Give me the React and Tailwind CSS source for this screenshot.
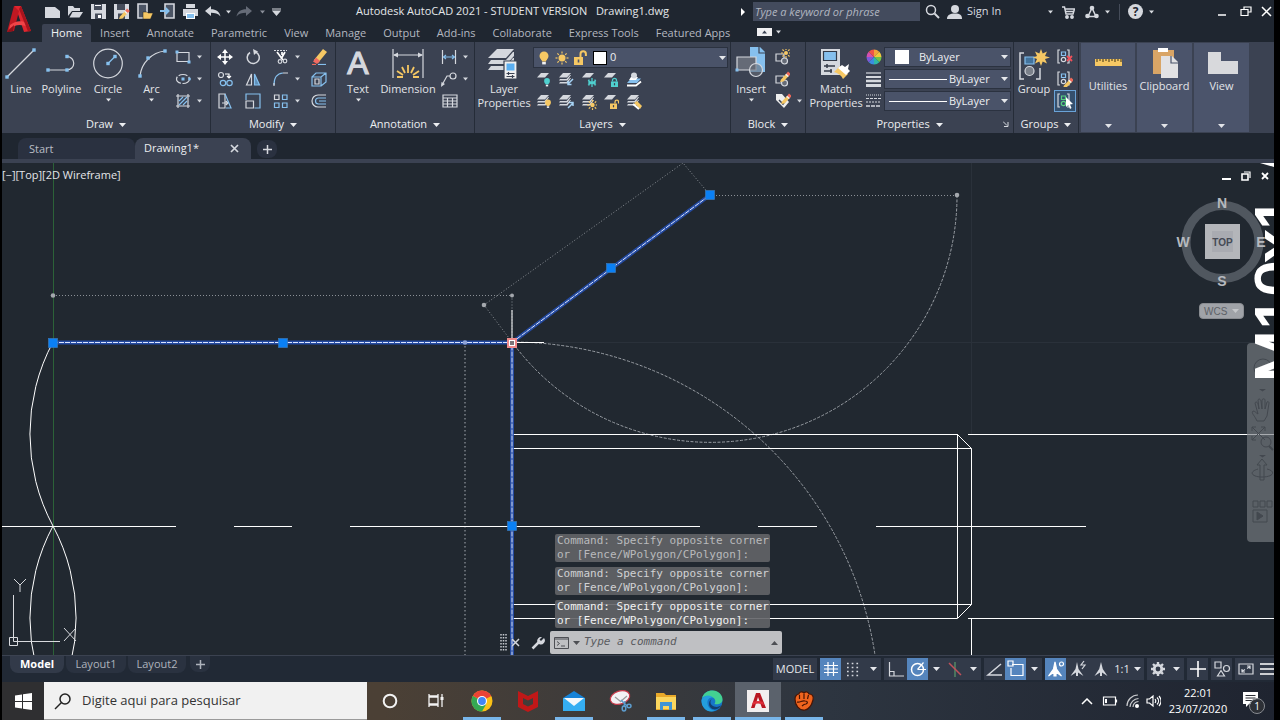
import { useState } from 'react';
import clsx from 'clsx';

const L = '#d5d8de';
const B = '#86c0ee';
const Y = '#f6c864';

const Svg = ({ w = 16, h = 16, children, className }) => (
  <svg
    width={w}
    height={h}
    viewBox={`0 0 ${w} ${h}`}
    fill="none"
    stroke={L}
    strokeWidth="1.2"
    className={clsx('shrink-0', className)}
    aria-hidden="true"
  >
    {children}
  </svg>
);

const Caret = ({ className }) => (
  <svg width="7" height="4" viewBox="0 0 7 4" className={clsx('shrink-0', className)} fill="currentColor" aria-hidden="true">
    <path d="M0 0h7L3.5 4z" />
  </svg>
);

const Dot = ({ x, y, s = 3.4 }) => (
  <rect x={x - s / 2} y={y - s / 2} width={s} height={s} fill={B} stroke="none" />
);

/* ---------- shared icon parts ---------- */

const Pencil = ({ x = 0, y = 0 }) => (
  <g transform={`translate(${x} ${y})`} stroke="none">
    <path d="M1 8.5L6 3l2.5 2.3L3.5 10.5 0 11z" fill={Y} />
    <path d="M6 3l2-2.5 3 2.5-2.5 2.3z" fill="#ef6a5a" />
    <path d="M5.3 3.7l.9-.9 2.6 2.3-.9.9z" fill="#f3f3f3" />
  </g>
);

const Sun = ({ x, y, r = 3 }) => (
  <g transform={`translate(${x} ${y})`}>
    <circle r={r} fill={Y} stroke="none" />
    {[0, 45, 90, 135, 180, 225, 270, 315].map((a) => (
      <path key={a} d={`M0 ${-r - 1}V${-r - 3}`} stroke={Y} strokeWidth="1.2" transform={`rotate(${a})`} />
    ))}
  </g>
);

const Bulb = ({ x, y, color = Y, s = 1 }) => (
  <g transform={`translate(${x} ${y}) scale(${s})`} stroke="none">
    <circle r="3.2" fill={color} />
    <path d="M-2 2h4l-.6 2h-2.8z" fill={color} />
    <path d="M-1.3 4.2h2.6V6h-2.6z" fill="#f2f2f2" />
  </g>
);

const Padlock = ({ x, y, color = Y, open }) => (
  <g transform={`translate(${x} ${y})`}>
    <rect width="7" height="5.5" fill={color} stroke="none" />
    <path d={open ? 'M5 0V-1.5a1.8 1.8 0 0 1 3.6 0V0' : 'M1.5 0V-1.2a2 2 0 0 1 4 0V0'} stroke={color} strokeWidth="1.3" />
    <path d="M3.5 1.6v2.2" stroke="#3b4252" />
  </g>
);

const Sheets = ({ n = 3 }) => (
  <g stroke="none" fill={L}>
    <path d="M5 1h8L9 5.5H1z" />
    {n > 1 && <path d="M2 7h6.5l3.5-4h1L9.5 8.6H1z" />}
    {n > 2 && <path d="M2 10h6.5l3.5-4h1l-3.5 5.6H1z" />}
  </g>
);

/* ---------- quick access toolbar ---------- */

const quickAccess = [
  ['New', <path d="M1 4h10l5 4v7H1z" fill={L} stroke="none" />],
  ['Open', <g fill={L} stroke="none"><path d="M1 13V3h5l1.5 2H13v3H5z" /><path d="M5.5 9H16l-3.5 5.5h-10z" /></g>],
  ['Save', <g stroke="none"><path d="M1 1h15v15H1z" fill={L} /><path d="M4 1h8v6H4z M5 10.5h7V16H5z" fill="#454c5a" /><path d="M5 2h6v1H5z M8 12h3v3H8z" fill="#fff" /></g>],
  ['Save As', <g stroke="none"><path d="M1 1h15v15H1z" fill={L} /><path d="M4 1h8v6H4z M5 10.5h7V16H5z" fill="#454c5a" /><Pencil x={6} y={5} /></g>],
  ['Open from Web', <g><path d="M2 1h9v14H2z" fill="#4b5464" stroke={L} strokeWidth="1.6" /><path d="M7 16V9h4l1 1h5l-2.5 6z" fill={Y} stroke="#222" strokeWidth=".5" /></g>],
  ['Save to Web', <g><path d="M6 1h9v14H6z" fill="#4b5464" stroke={L} strokeWidth="1.6" /><path d="M1 8h8M6.500 5l3 3-3 3" stroke={B} strokeWidth="2" /></g>],
  ['Plot', <g stroke="none"><path d="M4 1h9v4H4z M1 6h15v7H1z" fill={L} /><path d="M4 10h9v6H4z" fill="#fff" /><path d="M5 11h7v4H5z" fill={B} /></g>],
];

const Arrow = ({ flip, color }) => (
  <Svg w={16} h={14} className={flip && '-scale-x-100'}>
    <path d="M0 6l6-5v3.200c5 0 8.500 2 9.500 7.300C13 8.500 10 7.800 6 7.800V11z" fill={color} stroke="none" />
  </Svg>
);

const menuTabs = ['Home', 'Insert', 'Annotate', 'Parametric', 'View', 'Manage', 'Output', 'Add-ins', 'Collaborate', 'Express Tools', 'Featured Apps'];

const Header = () => {
  const [active, setActive] = useState('Home');

  return (
    <header className="flex shrink-0 bg-[#1f2630] text-[#d8dbe0]">
      <button aria-label="Application menu" className="flex w-[39px] shrink-0 items-start pt-1 pl-1">
        <svg width="25" height="30" viewBox="0 0 25 30" aria-hidden="true">
          <path d="M8 2h7l10 25-7 1-6-18z" fill="#e0262f" />
          <path d="M8 2l5 5L8 27l-7 1z" fill="#c01822" />
          <path d="M4 21c5-4 11-5 17-2l1 4c-6-3-13-3-19 2z" fill="#f04448" />
          <path d="M1 28l7-7-1 6z" fill="#8e1018" />
          <path d="M15 2l10 25-3 .5L13 5z" fill="#a8141d" />
        </svg>
      </button>
      <div className="min-w-0 grow">
        <div className="flex h-[23px] items-center">
          {quickAccess.map(([label, icon]) => (
            <button key={label} aria-label={label} className="flex w-[23px] justify-center">
              <Svg w={17} h={17}>{icon}</Svg>
            </button>
          ))}
          <button aria-label="Undo" className="flex w-[22px] justify-center"><Arrow color={L} /></button>
          <button aria-label="Undo list" className="flex w-2 justify-center"><Caret className="w-[5px]" /></button>
          <button aria-label="Redo" className="flex w-6 justify-center"><Arrow flip color="#656b77" /></button>
          <button aria-label="Redo list" className="flex w-3 justify-center text-[#8b909a]"><Caret className="w-[5px]" /></button>
          <button aria-label="Customize toolbar" className="flex w-4 justify-center">
            <Svg w={9} h={8}><path d="M0 1h9M1 3h7L4.500 7z" fill={L} stroke={L} /></Svg>
          </button>
          <div className="min-w-0 grow text-center text-[11px] whitespace-pre text-[#e4e6ea]">
            Autodesk AutoCAD 2021 - STUDENT VERSION{'   '}Drawing1.dwg
          </div>
          <svg width="4" height="8" className="mr-2 shrink-0" fill="#fff" aria-hidden="true"><path d="M0 0l4 4-4 4z" /></svg>
          <input
            aria-label="Search help"
            placeholder="Type a keyword or phrase"
            className="h-[19px] w-[167px] bg-[#434b5d] px-0.5 text-[11px] italic outline-none placeholder:text-[#b1b6c0]"
          />
          <button aria-label="Search" className="flex w-6 justify-center">
            <Svg w={15} h={15}><circle cx="6" cy="6" r="4.500" strokeWidth="1.500" /><path d="M9.500 9.500l4.500 4.500" strokeWidth="2" /></Svg>
          </button>
          <button className="flex w-[113px] items-center gap-1 text-[11px]">
            <Svg w={17} h={16} className="ml-0.5">
              <circle cx="9" cy="5" r="4" fill={L} stroke="none" />
              <path d="M1 15c0-4 3-5.500 8-5.500s7 1.500 7 5.500z" fill={L} stroke="none" />
            </Svg>
            Sign In
            <Caret className="mr-1 ml-auto w-[5px]" />
          </button>
          <button aria-label="App store" className="flex w-[22px] justify-center">
            <Svg w={14} h={14}>
              <path d="M1 2h2.500l1.500 7h7l1.500-5H4M5 6.500h8" strokeWidth="1.500" />
              <circle cx="6" cy="12" r="1.300" fill={L} /><circle cx="11" cy="12" r="1.300" fill={L} />
            </Svg>
          </button>
          <button aria-label="Autodesk account" className="flex w-9 items-center justify-center gap-1.5">
            <Svg w={14} h={14}>
              <path d="M7 3L3 11.500h8z" strokeWidth="1.500" />
              <circle cx="7" cy="3" r="2.300" fill={L} stroke="none" />
              <circle cx="2.500" cy="11" r="2.300" fill={L} stroke="none" />
              <circle cx="11.500" cy="11" r="2.300" fill={L} stroke="none" />
            </Svg>
            <Caret className="w-[5px]" />
          </button>
          <span className="mr-2 ml-1 h-4 w-px bg-[#454c59]" />
          <button aria-label="Help" className="flex items-center gap-1.5">
            <span className="flex size-[15px] items-center justify-center rounded-full bg-[#d5d8de] text-[12px] font-bold text-[#1f2630]">?</span>
            <Caret className="w-[5px]" />
          </button>
          <div className="ml-14 flex">
            <button aria-label="Minimize" className="flex w-6 justify-center"><Svg w={8} h={10}><path d="M0 9h8" stroke="#fff" strokeWidth="1.500" /></Svg></button>
            <button aria-label="Restore" className="flex w-6 justify-center"><Svg w={12} h={10}><path d="M1 3.500h7v6H1zM4 3V1h7v5H8.500" stroke="#fff" /></Svg></button>
            <button aria-label="Close" className="flex w-4 justify-center"><Svg w={11} h={11}><path d="M1 1l9 9M10 1l-9 9" stroke="#fff" strokeWidth="1.500" /></Svg></button>
          </div>
        </div>
        <nav className="flex h-[19px] items-end gap-px">
          {menuTabs.map((tab) => (
            <button
              key={tab}
              onClick={() => setActive(tab)}
              className={clsx(
                'h-[18px] text-[11px] leading-4 whitespace-nowrap',
                active === tab ? 'ml-px rounded-t-xs bg-[#3b4252] px-[9px] text-[#f1f2f4]' : 'px-2 text-[#b4b8c0]'
              )}
            >
              {tab}
            </button>
          ))}
          <button aria-label="Minimize ribbon" className="mb-1.5 ml-[18px] flex items-center gap-1">
            <span className="flex h-2 w-[15px] items-center justify-center bg-[#f0f0f2] text-[#3b4252]"><Caret className="w-[5px] rotate-180" /></span>
            <Caret className="w-[5px]" />
          </button>
        </nav>
      </div>
    </header>
  );
};

/* ---------- ribbon ---------- */

const Panel = ({ title, width, launcher, children }) => (
  <section className={clsx('flex shrink-0 flex-col border-r border-[#252c38]', width)}>
    <div className="flex grow pt-1">{children}</div>
    <button className="relative flex h-[17px] items-center justify-center gap-1.5 text-[11px] text-[#eceef1]">
      {title}
      <Caret />
      {launcher && (
        <svg width="6" height="6" className="absolute right-1 bottom-1.5" stroke={L} fill="none" aria-hidden="true">
          <path d="M0 .500l4 4M5 1v4.500H1" />
        </svg>
      )}
    </button>
  </section>
);

const Big = ({ label, width, caret, children }) => (
  <button className={clsx('flex shrink-0 flex-col items-center text-[11px] leading-[14px] text-[#e2e4e8]', width)}>
    <Svg w={36} h={36}>{children}</Svg>
    <span className="whitespace-pre">{label}</span>
    {caret && <Caret className="mt-0.5 w-[5px]" />}
  </button>
);

const Small = ({ label, width = 'w-7', caret, on, children }) => (
  <button
    aria-label={label}
    className={clsx('flex h-[22px] items-center justify-center gap-1.5 text-[#d5d8de]', width, on && 'border border-[#6aa3d8] bg-[#35506e]')}
  >
    <Svg>{children}</Svg>
    {caret && <Caret className="w-[5px]" />}
  </button>
);

const layerTools = [
  ['Layer off', 1, <Bulb x={11} y={9} s={0.9} color="#4fd0cf" />],
  ['Isolate', 3, <path d="M15 7l-5 5M10 9v3.500h3.500" stroke="#a7d3f5" strokeWidth="1.500" />],
  ['Freeze', 1, <path d="M11 6v9M7 8.500l8 4.500M15 8.500l-8 4.500M8 7.500v6M14 7.500v6" stroke="#4fd0cf" strokeWidth="1.300" />],
  ['Lock', 1, <Padlock x={8} y={9.5} color="#4fd0cf" />],
  ['Make current', 0, <g><path d="M1 13.500h9l5-4" stroke="#fff" strokeWidth="1.800" /><path d="M1 11l4-4.500h10L11 11z" fill={B} stroke="none" /><path d="M5 5h7l-2 3H3z" fill="#fff" stroke="none" /><circle cx="8" cy="3.500" r="3" fill={L} stroke="none" /></g>],
  ['Turn all layers on', 3, <Bulb x={12} y={8.5} s={0.9} />],
  ['Unisolate', 3, <path d="M10 14l5-5M11 8.500h4V12" stroke="#a7d3f5" strokeWidth="1.500" />],
  ['Thaw', 3, <Sun x={11.5} y={11} r={2.2} />],
  ['Unlock', 1, <Padlock x={7} y={9.500} open />],
  ['Match layer', 3, <g><path d="M8 9l3-2 5 5-2 3z" fill={Y} stroke="none" /><path d="M7 10l6 5" stroke="#fff" strokeWidth="2" /></g>],
];

const PropertySelect = ({ label, pad = 'pl-16', children }) => (
  <div className="relative h-5 border border-[#2b3240] bg-[#4a5369]">
    <select aria-label={label} className={clsx('absolute inset-0 size-full appearance-none text-[11px] text-[#eceef1] outline-none', pad)}>
      <option>ByLayer</option>
      <option>ByBlock</option>
    </select>
    <div className="pointer-events-none relative flex h-full items-center pr-0.5 pl-1 text-[#e6e8ec]">
      {children}
      <Caret className="ml-auto" />
    </div>
  </div>
);

const Collapsed = ({ label, width, children }) => (
  <button className={clsx('mt-px ml-0.5 flex h-[89px] shrink-0 flex-col items-center bg-[#4b546b] pt-1 text-[11px] leading-[14px] text-[#e2e4e8]', width)}>
    <Svg w={36} h={32}>{children}</Svg>
    <span>{label}</span>
    <Caret className="mt-auto mb-1" />
  </button>
);

const groupTools = [
  ['Ungroup', <path d="M10 7l5 5M15 7l-5 5" stroke="#f0505a" strokeWidth="1.800" />],
  ['Group edit', <Pencil x={6} y={6} />],
  ['Group selection', <path d="M9 4v10l2.500-2 1.500 4 1.500-1-1.500-3.500 3-.500z" fill="#fff" stroke="none" />],
];

const Ribbon = () => (
  <div className="flex h-[91px] shrink-0 overflow-hidden bg-[#3b4252]">
    <Panel title="Draw" width="w-[209px]">
      <Big label="Line" width="w-[38px]"><path d="M4 31L31 4" /><Dot x={4} y={31} /><Dot x={31} y={4} /></Big>
      <Big label="Polyline" width="w-[43px]"><path d="M4 24h19a6.700 6.700 0 0 0 0-13.500" /><Dot x={4} y={24} /><Dot x={23} y={24} /><Dot x={23} y={10.5} /></Big>
      <Big label="Circle" width="w-[50px]" caret><circle cx="18" cy="17.500" r="14.300" /><path d="M18 17.500l7-7" stroke={B} /><Dot x={18} y={17.5} /><Dot x={25} y={10.5} /></Big>
      <Big label="Arc" width="w-[37px]" caret><path d="M6 30A28 28 0 0 1 31 5" /><Dot x={6} y={30} /><Dot x={14} y={12} /><Dot x={31} y={5} /></Big>
      <div>
        <Small label="Rectangle" width="w-9" caret><path d="M2 3.500h12v9H2z" /><Dot x={2} y={3} s={3} /><Dot x={14} y={13} s={3} /></Small>
        <Small label="Ellipse" width="w-9" caret><ellipse cx="8" cy="8" rx="6.500" ry="4.500" strokeDasharray="9 1.500" /><Dot x={8} y={8} s={3} /><Dot x={14.5} y={8} s={2.5} /></Small>
        <Small label="Hatch" width="w-9" caret><path d="M1 3h14M1 13h14M3 1v14M13 1v14" /><path d="M4 8l4-4M4 12l8-8M8 12l4-4" stroke={B} /></Small>
      </div>
    </Panel>

    <Panel title="Modify" width="w-[125px]">
      <div>
        <Small label="Move"><path d="M8 2v12M2 8h12" stroke="#fff" strokeWidth="1.500" /><path d="M8 0l3 4H5zM8 16l3-4H5zM0 8l4-3v6zM16 8l-4-3v6z" fill="#fff" stroke="none" /></Small>
        <Small label="Copy"><circle cx="4" cy="4" r="2.500" /><path d="M8 3h4v4M10 5l2 2 2-2" stroke="#fff" /><circle cx="6" cy="12" r="2.700" stroke={B} /><circle cx="12.500" cy="12" r="2.700" stroke={B} /></Small>
        <Small label="Stretch"><path d="M2 1h6v14H2zM5 10h6M9 8l2 2-2 2" /><path d="M8 1l6 14H9" stroke={B} /></Small>
      </div>
      <div>
        <Small label="Rotate"><path d="M10.500 3A6 6 0 1 1 5 3.500" strokeWidth="1.500" /><path d="M8 0l5 2.500L9 6z" fill={L} stroke="none" /></Small>
        <Small label="Mirror"><path d="M6.500 3v11H1.500z" /><path d="M9.500 3v11h5z" fill="#5f8fb8" stroke={B} /></Small>
        <Small label="Scale"><path d="M1 8h7.500v7H1z" /><path d="M1 7V1h14v14H9.500" stroke={B} /></Small>
      </div>
      <div>
        <Small label="Trim" width="w-[38px]" caret><path d="M1 1.500h13" strokeDasharray="2 1" /><path d="M4 3l6 8M12 3l-4 7M9 3v3" stroke="#fff" strokeWidth="1.700" /><circle cx="7" cy="12.500" r="1.800" /><circle cx="12" cy="12" r="1.800" /></Small>
        <Small label="Fillet" width="w-[38px]" caret><path d="M1 14C1 6 4 2.500 10 2" stroke={B} /><path d="M10 2h5M1 15v-3" /></Small>
        <Small label="Array" width="w-[38px]" caret><path d="M1.500 2h4.500v4.500H1.500z" /><path d="M9.500 2H14v4.500H9.500zM1.500 10H6v4.500H1.500zM9.500 10H14v4.500H9.500z" stroke={B} /></Small>
      </div>
      <div>
        <Small label="Erase"><path d="M3 11L12 0l4 3L7 14z" fill={Y} stroke="none" /><path d="M5 8.500l-3 4L6 15l3-3z" fill="#f06a62" stroke="none" /><path d="M1 15.500h4" stroke="#ef6a5a" /><path d="M7 15.500h8" stroke={B} /></Small>
        <Small label="Explode"><path d="M1 6h9v9H1zM1 6l4-4h10v9l-5 4M10 6l5-4" stroke={B} /><path d="M4 8h4v5H4z" /></Small>
        <Small label="Offset"><path d="M15 2H7a6 6 0 0 0 0 12h8" /><path d="M15 5H7.500a3 3 0 0 0 0 6H15M15 8H8" stroke={B} /></Small>
      </div>
    </Panel>

    <Panel title="Annotation" width="w-[139px]">
      <Big label="Text" width="w-11" caret><text x="18" y="28" textAnchor="middle" fontSize="32" fontFamily="Liberation Sans, sans-serif" fill={L}>A</text></Big>
      <Big label="Dimension" width="w-14">
        <path d="M3 3v29M33 3v29M4 9h28" /><path d="M3 9l5-2.500v5zM33 9l-5-2.500v5z" fill={L} stroke="none" />
        <path d="M18 19v8M12 21l3 6M24 21l-3 6M7 25l6 4M29 25l-6 4M7 31h6M23 31h6" stroke={Y} strokeWidth="1.800" />
      </Big>
      <div>
        <Small label="Linear" width="w-9" caret><path d="M1.500 1v14M14.500 1v14" stroke={L} /><path d="M2 8h12M5 6L2.500 8 5 10M11 6l2.500 2L11 10" stroke={B} /></Small>
        <Small label="Leader" width="w-9" caret><circle cx="12" cy="5" r="3" /><path d="M9 5H6l-5 9" /><path d="M0 16l.500-5L4 13z" fill={L} stroke="none" /></Small>
        <Small label="Table" width="w-[27px]"><path d="M1 2h14v12H1zM1 5h14M1 8h14M1 11h14M5.500 5v9M10.500 5v9" /></Small>
      </div>
    </Panel>

    <Panel title="Layers" width="w-64">
      <Big label={'Layer\nProperties'} width="w-[58px]">
        <g stroke="none" fill={L}><path d="M11 3h17l-8 9H2z" /><path d="M5 14h15l7-8h1v4l-7 8H2z" /><path d="M5 20h15l7-8h1v4l-7 8H2z" /><path d="M18 15h13v18H18z" fill="#eee" stroke="#3b4252" /><path d="M20.500 17.500h8v7h-8z" fill="#5aaef0" /></g>
        <path d="M20.500 27.500h8M20.500 30.500h8M22.500 26v3M26.500 29v3" stroke="#3b4252" />
      </Big>
      <div className="mr-0.5 grow">
        <div className="relative mt-px h-[21px] border border-[#2b3240] bg-[#4a5369]">
          <select aria-label="Layer" className="absolute inset-0 size-full appearance-none pl-[76px] text-[11px] text-[#eceef1] outline-none"><option>0</option></select>
          <div className="pointer-events-none relative flex h-full items-center gap-0.5 pr-px pl-0.5 text-[#e6e8ec]">
            <Svg><Bulb x={8} y={6} s={1.4} /></Svg>
            <Svg><Sun x={8} y={8} r={3.5} /></Svg>
            <Svg><path d="M2 7h9v8H2z" fill={Y} stroke="none" /><path d="M8.500 7V4a2.700 2.700 0 0 1 5.400 0v2" stroke={Y} strokeWidth="2" /><path d="M6.500 9.500v3" stroke="#4a5369" strokeWidth="1.600" /></Svg>
            <span className="ml-1 size-3 bg-white outline outline-black" />
            <Caret className="ml-auto" />
          </div>
        </div>
        <div className="mt-px grid w-28 grid-cols-5">
          {layerTools.map(([label, n, badge]) => (
            <Small key={label} label={label} width="w-[22px]">{n > 0 && <Sheets n={n} />}{badge}</Small>
          ))}
        </div>
      </div>
    </Panel>

    <Panel title="Block" width="w-[75px]">
      <Big label="Insert" width="w-10" caret>
        <path d="M17 1h10l5 5v20H17z" fill={B} stroke="none" /><path d="M26 1v6h6" stroke="#3b4252" />
        <path d="M4 11h19v13H4z" fill="#656b77" stroke={L} /><circle cx="23" cy="24" r="6.500" fill="#656b77" fillOpacity=".6" /><Dot x={4} y={24} s={3} />
      </Big>
      <div>
        <Small label="Create block" width="w-[22px]"><path d="M2 5h8v7H2z" /><circle cx="10.500" cy="12" r="3" fill="#656b77" /><Sun x={12} y={4} r={2} /></Small>
        <Small label="Edit block" width="w-[22px]"><path d="M2 5h8v7H2z" /><circle cx="10.500" cy="12" r="3" fill="#656b77" /><Pencil x={6} y={0} /></Small>
        <Small label="Edit attributes" width="w-[34px]" caret><path d="M1 1h6l7 8-5 6-8-8z" fill="#eee" stroke="none" /><path d="M4 7l4 4 3-4" stroke="#3b4252" strokeWidth="1.500" /><Pencil x={6} y={0} /></Small>
      </div>
    </Panel>

    <Panel title="Properties" width="w-[208px]" launcher>
      <Big label={'Match\nProperties'} width="w-[60px]">
        <path d="M3 3h19v26H3z" fill={L} stroke="none" /><path d="M5.500 5.500h13v9h-13z" fill={B} stroke="#333a48" />
        <path d="M6 20h11M6 25h8M9 18v4M13 23v4" stroke="#333a48" strokeWidth="1.500" />
        <path d="M16 26l6-6 8 8-5 5c-2-4-5-6-9-7z" fill={Y} stroke="none" /><path d="M20 22l4-3 3 2 4-3-1 5 2 2-4 4z" fill="#fff" stroke="none" />
      </Big>
      <div className="w-[18px] shrink-0">
        <Small label="Color" width="w-4">
          <g stroke="none">
            {['#f2a33a', '#f0c93c', '#6cc24a', '#2fb8a8', '#3b8de0', '#7d5ad8', '#d44fb0', '#ee5548'].map((c, i) => (
              <path key={c} d="M8 8V.5a7.500 7.500 0 0 1 5.300 2.200z" fill={c} transform={`rotate(${i * 45} 8 8)`} />
            ))}
          </g>
        </Small>
        <Small label="Lineweight" width="w-4"><path d="M0 2h15" /><path d="M0 6h15" strokeWidth="2" /><path d="M0 10h15" strokeWidth="2.500" /><path d="M0 14.500h15" strokeWidth="3" /></Small>
        <Small label="Linetype" width="w-4"><path d="M0 2h15" strokeDasharray="1 1" /><path d="M0 5.500h15" strokeDasharray="3 1" /><path d="M0 9h15" strokeDasharray="2 1" /><path d="M0 13h15" strokeDasharray="4 1" strokeWidth="1.500" /></Small>
      </div>
      <div className="mt-px mr-0.5 flex grow flex-col gap-0.5">
        <PropertySelect label="Object color" pad="pl-[34px]"><span className="ml-1.5 size-3.5 bg-white" /></PropertySelect>
        <PropertySelect label="Object lineweight"><span className="h-px w-[58px] bg-white" /></PropertySelect>
        <PropertySelect label="Object linetype"><span className="h-px w-[58px] bg-white" /></PropertySelect>
      </div>
    </Panel>

    <Panel title="Groups" width="w-[65px]">
      <Big label="Group" width="w-10">
        <path d="M8 7H4v26h4M20 33h4V22" strokeWidth="1.500" /><path d="M9 11h9v7H9z" fill="#43739c" stroke={B} /><circle cx="13.500" cy="25" r="4.500" fill="#7a808a" />
        <path d="M25 3l1.700 4.500L31 5.500 29 10l5 1.500L29 13l2 4.500-4.300-2L25 20l-1.700-4.500-4.300 2L21 13l-4-1.500L21 10l-2-4.500 4.300 2z" fill={Y} stroke="none" />
      </Big>
      <div className="grow">
        {groupTools.map(([label, mark], i) => (
          <Small key={label} label={label} width="w-[22px]" on={i === 2}>
            <path d="M3 1H1v13h2M10 1h2v13h-2" />
            <path d="M4.500 3h4v3.500h-4z" stroke={i === 2 ? '#58d080' : B} />
            <circle cx="6.500" cy="10.500" r="2.200" stroke={i === 2 ? '#58d080' : L} />
            {mark}
          </Small>
        ))}
      </div>
    </Panel>

    <Collapsed label="Utilities" width="w-[54px]">
      <path d="M5 12h27v7H5z" fill={Y} stroke="none" /><path d="M7 12v3M10 12v2M13 12v3M16 12v2M19 12v3M22 12v2M25 12v3M28 12v2M31 12v3" stroke="#5a4a20" />
    </Collapsed>
    <Collapsed label="Clipboard" width="w-[55px]">
      <path d="M6 3h21v24H6z" fill="#d9a566" stroke="none" /><path d="M11 1h10v4H11z" fill="#fff" stroke="none" />
      <path d="M14 9h11l6 6v16H14z" fill="#e2e2e4" stroke="none" /><path d="M24 9v7h7" stroke="#4b546b" />
    </Collapsed>
    <Collapsed label="View" width="w-[55px]"><path d="M4 5h13v9h17v13H4z" fill="#d8d9dc" stroke="none" /></Collapsed>
  </div>
);

const FileTabs = () => (
  <div className="flex h-[30px] shrink-0 items-end border-b-4 border-[#3b4252] bg-[#1f2630] text-[11px]">
    <button className="ml-4 h-[21px] w-[117px] rounded-t-lg bg-[#2a3140] pl-[11px] text-left leading-5 text-[#b9bdc5]">Start</button>
    <div className="flex h-[21px] w-[116px] items-center rounded-t-lg bg-[#3b4252] pr-3 pl-[9px] text-[#eceef1]">
      <button>Drawing1*</button>
      <button aria-label="Close drawing" className="ml-auto"><Svg w={9} h={9}><path d="M1 1l7 7M8 1L1 8" strokeWidth="1.700" /></Svg></button>
    </div>
    <button aria-label="New drawing" className="mb-px ml-1.5 flex h-[18px] w-5 items-center justify-center rounded-lg bg-[#2a3140]">
      <Svg w={9} h={9}><path d="M4.500 0v9M0 4.500h9" strokeWidth="1.500" /></Svg>
    </button>
  </div>
);

/* ---------- drawing area ---------- */

const grips = [[53, 343], [283, 343], [611, 268], [710, 195], [512, 526]];
const selected = 'M53 342.500H512V660M512 342.500L710 195';

const Drawing = () => (
  <svg viewBox="2 163 1272 492" preserveAspectRatio="xMinYMin slice" className="absolute inset-0 size-full" fill="none" stroke="#fff" aria-label="Model space">
    <path d="M971.500 163V434M512 342.500H1274" stroke="#2a313a" />
    <path d="M53.500 163V655" stroke="#2c6238" shapeRendering="crispEdges" />
    <g stroke="#8b9096" strokeDasharray="1 2">
      <path d="M53 295.500H512V342M484 305L512 342M484 305L683 163L710 195M710 195.500H957" />
      <path d="M465 342V655" stroke="#7b8087" strokeWidth="1.500" strokeDasharray="1.500 2.500" />
    </g>
    <g stroke="#9a9fa5" strokeDasharray="3 1.500">
      <path d="M957 195A246.500 246.500 0 0 1 512 342" />
      <path d="M512 342A368 368 0 0 1 875 655" />
    </g>
    <g fill="#a4a8ad" stroke="none">
      <circle cx="53" cy="295.500" r="2.300" /><circle cx="512" cy="295.500" r="2" /><circle cx="484" cy="305" r="2.300" /><circle cx="957" cy="195" r="2.300" />
    </g>
    <path d="M53 342A195 195 0 0 0 53 526A195 195 0 0 0 53 710M53 526A195 195 0 0 1 53 710" />
    <path d="M2 526.500H176M234 526.500H292M350 526.500H700M758 526.500H817M876 526.500H1086" shapeRendering="crispEdges" />
    <path d="M512 434.500H957.500L971.500 448.500V604.500L957.500 618.500H512M512 448.500H971.500M512 604.500H971.500M957.500 434V618M968 434.500H1274M968 618.500H1274M971.500 618V655" />
    <path d={selected} stroke="#2450b4" strokeWidth="4" strokeOpacity=".85" />
    <path d={selected} stroke="#dbe5ff" strokeWidth="1" strokeDasharray="5 1" />
    <circle cx="465" cy="342.500" r="2.300" fill="#8fa4d8" stroke="none" />
    <path d="M512 310V342M512 342.500H544" />
    {grips.map(([x, y]) => (
      <rect key={`${x}-${y}`} x={x - 4.5} y={y - 4.5} width="9" height="9" fill="#0a80f5" stroke="#3a78b8" strokeWidth=".7" />
    ))}
    <rect x="508.500" y="339.500" width="7" height="7" fill="#7d7478" stroke="#f08a8a" strokeWidth="3" />
    <rect x="509.500" y="340.500" width="5" height="5" stroke="#fff" />

    {/* UCS icon */}
    <path d="M13.500 595V641.500H60M9.500 637.500h8v8h-8zM14 579l6 6 6-6M20 585v7M64 628l12 13M76 628L64 641" stroke="#d8dade" />
  </svg>
);

/* thread callout that runs up the edge of the sheet */
const ThreadLabel = () => (
  <svg width="22" height="240" viewBox="1252 163 22 240" className="pointer-events-none absolute top-0 right-0" fill="#fff" stroke="#fff" strokeWidth="2">
    <text transform="translate(1298 382) rotate(-90)" fontSize="62" fontFamily="Liberation Sans, sans-serif">M10x1</text>
    <path d="M1260 163H1274V167z" stroke="none" />
  </svg>
);

const ViewCube = () => (
  <svg width="100" height="130" viewBox="1174 192 100 130" className="absolute top-[29px] right-0" fill="none" aria-label="ViewCube">
    <circle cx="1222.500" cy="242" r="36.500" stroke="#5d636c" strokeOpacity=".8" strokeWidth="9" />
    <rect x="1205" y="224" width="35" height="35" fill="#b4b6ba" />
    <rect x="1212" y="231" width="21" height="21" fill="#a9abb1" />
    <text x="1222.500" y="246" fontSize="10" fontWeight="700" textAnchor="middle" fontFamily="Liberation Sans, sans-serif" fill="#454a55">TOP</text>
    <g fontSize="14" fontWeight="700" textAnchor="middle" fontFamily="Liberation Sans, sans-serif" fill="#b6b9be">
      <text x="1222" y="208">N</text><text x="1222" y="286">S</text><text x="1183" y="247">W</text><text x="1261" y="247">E</text>
    </g>
  </svg>
);

const NavBar = () => (
  <div className="absolute top-[180px] right-0 flex h-[199px] w-[27px] items-start overflow-hidden rounded-l-sm bg-[#7a7e84]/65">
    <svg width="27" height="199" viewBox="0 0 27 199" fill="none" stroke="#43484f" aria-label="Navigation bar">
      <circle cx="16" cy="25" r="9" /><path d="M12 46h7l-3.500 2.500z" fill="#43484f" stroke="none" />
      <path d="M9 76c-2-4-5-6-3-8 2 0 3 2 5 3L8 60c1-2 2-1 3 1l1 5-1-9c1-2 2-1 3 1l1 8V57c1-2 3-1 3 0v9l2-7c1-1 2 0 2 1l-2 13-3 5h-7z" />
      <path d="M5 84l13 13M18 84L5 97M5 88v-4h4M14 84h4v4M5 93v4h4" /><circle cx="19" cy="99" r="5" /><path d="M22 103l4 4" strokeWidth="2" />
      <path d="M12 112h7l-3.500 2.500z" fill="#43484f" stroke="none" />
      <path d="M13 137v-15h-3l5-6 5 6h-3v15zM11 126c-10 3-6 8 4 8 12 0 14-6 5-8" />
      <path d="M6 158h5v6H6zM13 158h5v6h-5zM20 158h5v6h-5zM6 167h14v12H6z" /><path d="M10 169l6 4-6 4z" fill="#43484f" />
    </svg>
  </div>
);

const history = ['text-[#b9babc]', 'text-[#d0d1d3]', 'text-[#f2f2f2]'];

const CommandLine = () => (
  <div className="absolute bottom-0 left-[498px] w-[282px] font-['DejaVu_Sans_Mono',monospace] text-[11px]">
    <div className="mb-[3px] ml-[55px] flex w-[215px] flex-col gap-[5px]">
      {history.map((tone) => (
        <p key={tone} className={clsx('rounded-xs bg-[#636468]/90 px-0.5 leading-[14px] whitespace-pre', tone)}>
          {'Command: Specify opposite corner\nor [Fence/WPolygon/CPolygon]:'}
        </p>
      ))}
    </div>
    <div className="flex h-6 items-center pb-px">
      <svg width="7" height="17" viewBox="0 0 7 17" stroke="#c6c9ce" strokeDasharray="1.500 1.500" strokeWidth="1.500" aria-hidden="true"><path d="M1 0v17M3.500 0v17M6 0v17" /></svg>
      <button aria-label="Close command line" className="ml-1"><Svg w={9} h={9}><path d="M1 1l7 7M8 1L1 8" strokeWidth="1.500" /></Svg></button>
      <button aria-label="Customize" className="ml-1.5 flex w-6 justify-center">
        <Svg w={14} h={14}><path d="M1.500 12.500l6-6" strokeWidth="2.500" /><path d="M13 2l-3 3-1.500-1.500L11 1a4 4 0 0 0-4.500 5.500L8 8a4 4 0 0 0 5-6z" fill={L} stroke="none" /></Svg>
      </button>
      <div className="flex h-full grow items-center gap-1 rounded-xs bg-[#bfc0c3] pr-1 pl-1 text-[#4d4f54]">
        <svg width="15" height="12" viewBox="0 0 15 12" fill="none" stroke="currentColor" aria-hidden="true"><path d="M.500.500h14v11H.500zM.500 2h14M3 4.500l2.500 2L3 8.500M7 9h4" /></svg>
        <Caret />
        <input aria-label="Command" placeholder="Type a command" className="min-w-0 grow italic outline-none placeholder:text-[#5a5b60]" />
        <Caret className="rotate-180" />
      </div>
    </div>
  </div>
);

const Canvas = () => (
  <main className="relative min-h-0 grow overflow-hidden bg-[#212830]">
    <Drawing />
    <div className="relative pt-[5px] text-[11px] leading-[14px] text-[#e4e6e9]">[−][Top][2D Wireframe]</div>
    <NavBar />
    <ThreadLabel />
    <ViewCube />
    <div className="absolute top-2 right-0 flex items-center">
      <button aria-label="Minimize view" className="flex w-[19px] justify-center"><Svg w={10} h={10}><path d="M0 8h9" stroke="#fff" strokeWidth="2" /></Svg></button>
      <button aria-label="Restore view" className="flex w-[19px] justify-center"><Svg w={10} h={10}><path d="M1 3h6v6H1z" stroke="#fff" strokeWidth="1.600" /><path d="M3 1h6v6" stroke="#fff" /></Svg></button>
      <button aria-label="Close view" className="flex w-[19px] justify-center"><Svg w={8} h={8}><path d="M1 1l6 6M7 1L1 7" stroke="#fff" strokeWidth="1.800" /></Svg></button>
    </div>
    <button className="absolute top-[140px] right-[30px] flex h-4 w-[45px] items-center justify-between rounded-sm border border-[#8a8d92] bg-[#a0a3a8] px-1 font-['Liberation_Sans',sans-serif] text-[10px] text-[#5d6167]">
      WCS
      <Caret className="text-[#c5c7ca]" />
    </button>
    <CommandLine />
  </main>
);

/* ---------- status bar ---------- */

const Toggle = ({ label, on, width = 'w-[21px]', children }) => (
  <button aria-label={label} aria-pressed={!!on} className={clsx('flex h-full items-center justify-center', width, on && 'bg-[#5585bd]')}>
    <Svg className="overflow-visible">{children}</Svg>
  </button>
);

const Drop = ({ label, width = 'w-4' }) => (
  <button aria-label={label} className={clsx('flex h-full items-center justify-center', width)}><Caret /></button>
);

const Cluster = ({ children }) => <div className="flex h-[22px] items-center bg-[#323a49]">{children}</div>;

const StatusBar = () => (
  <footer className="flex h-[27px] shrink-0 items-center border-t border-[#3b4250] bg-[#212935] text-[11px] text-[#e6e8ec]">
    <div className="flex h-full items-start gap-0.5 pl-2 text-[#aeb3bc]">
      <button className="h-[17px] w-[54px] rounded-b-lg bg-[#323a49] font-bold text-white">Model</button>
      <button className="h-[17px] w-[60px] rounded-b-lg bg-[#2a3240]">Layout1</button>
      <button className="h-[17px] w-[58px] rounded-b-lg bg-[#2a3240]">Layout2</button>
      <button aria-label="New layout" className="ml-0.5 flex h-4 w-5 items-center justify-center rounded-b-lg bg-[#2a3240]">
        <Svg w={9} h={9}><path d="M4.500 0v9M0 4.500h9" stroke="#aeb3bc" strokeWidth="1.500" /></Svg>
      </button>
    </div>
    <div className="ml-auto flex items-center gap-[3px]">
      <Cluster><button className="w-11 text-center text-[11px]">MODEL</button></Cluster>
      <Cluster>
        <Toggle label="Grid" on><path d="M5 1v14M10.500 1v14M1 4.500h14M1 8h14M1 11.500h14" stroke="#fff" /></Toggle>
        <Toggle label="Snap" width="w-6"><path d="M2 2.500h13M2 6.500h13M2 10.500h13M2 14.500h13" strokeWidth="1.700" strokeDasharray="1.700 3" /></Toggle>
        <Drop label="Snap settings" />
      </Cluster>
      <Cluster>
        <Toggle label="Ortho" width="w-[23px]"><path d="M1.500 1v14H16M1.500 10.500H6V15" /></Toggle>
        <Toggle label="Polar" on><circle cx="7.500" cy="8.500" r="6" stroke="#fff" strokeWidth="1.500" /><path d="M7.500 8.500H16M7.500 8.500l6-7" stroke="#fff" /></Toggle>
        <Drop label="Polar settings" />
        <Toggle label="Isometric"><path d="M8 1v15" stroke="#5c9a6c" /><path d="M2 2l12 12" stroke="#c0505a" strokeWidth="1.500" /></Toggle>
        <Drop label="Isometric settings" />
      </Cluster>
      <Cluster>
        <Toggle label="Tracking"><path d="M14 3L1 14h14" strokeWidth="1.500" /></Toggle>
        <Toggle label="Object snap" on><path d="M4 3.500h11v11H3V7" stroke="#fff" /><path d="M0 0h5v5H0z" stroke="#fff" /></Toggle>
        <Drop label="Object snap settings" />
      </Cluster>
      <Cluster>
        <Toggle label="Annotation visibility" on><path d="M7 1l1.500 7 5 7L8 11v4H6v-4l-5.500 4 5-7z" fill="#fff" stroke="#fff" /><circle cx="13.500" cy="3" r="2" stroke="#fff" /></Toggle>
        <Toggle label="Auto scale" width="w-6"><path d="M7 1l1.500 7 5 7L8 11.500V15H6v-3.500L.500 15l5-7z" fill={L} stroke="none" /><path d="M14 0l-3 4h4l-3 4" stroke={L} /></Toggle>
        <Toggle label="Annotation scale"><path d="M8 1l1.800 7 4.700 7L9 11.500V15H7v-3.500L1.500 15l4.700-7z" fill={L} stroke="none" /></Toggle>
        <button className="flex w-[33px] items-center justify-center gap-1 tabular-nums">1:1 <Caret /></button>
      </Cluster>
      <Cluster>
        <Toggle label="Workspace"><circle cx="8" cy="8" r="3.800" strokeWidth="2.800" /><path d="M8 1v14M1 8h14M3 3l10 10M13 3L3 13" strokeWidth="2.400" strokeDasharray="2.800 9 2.800" /></Toggle>
        <Drop label="Workspace list" />
      </Cluster>
      <Cluster><Toggle label="Annotation monitor"><path d="M8 0v16M0 8h16" stroke="#fff" strokeWidth="1.600" /></Toggle></Cluster>
      <Cluster><Toggle label="Isolate objects"><path d="M1 1h6v6H1z" /><circle cx="12.500" cy="7.500" r="3" /><path d="M7 9.500l3.500 5.500h-7z" /></Toggle></Cluster>
      <Cluster>
        <Toggle label="Clean screen"><path d="M1 3h14v10H1zM4 10.500l3-2M12 5.500l-3 2M4 8v3h3M12 8V5H9" /></Toggle>
        <Toggle label="Customization" width="w-[18px]"><path d="M3 3h14M3 8h14M3 13h14" stroke="#fff" strokeWidth="1.600" /></Toggle>
      </Cluster>
    </div>
  </footer>
);

/* ---------- windows taskbar ---------- */

const apps = [
  ['Cortana', false, <circle cx="12" cy="12" r="6.300" stroke="#f2f2f2" strokeWidth="2" />],
  ['Task view', false, <g stroke="#f2f2f2" strokeWidth="1.300"><path d="M5 8h9v7H5zM5 5v2h9V5M5 18v-2h9v2M18 5v13" /><path d="M18 8v3" strokeWidth="3" /></g>],
  ['Chrome', true, <g stroke="none"><circle cx="12" cy="12" r="10.500" fill="#fbc116" /><path d="M12 12L2.900 6.700A10.500 10.500 0 0 0 12 22.500l4-7z" fill="#34a853" /><path d="M12 12L2.900 6.700A10.500 10.500 0 0 1 21.300 7z" fill="#ea4335" /><circle cx="12" cy="12" r="5" fill="#fff" /><circle cx="12" cy="12" r="3.900" fill="#4285f4" /></g>],
  ['McAfee', false, <path d="M2 2l10 5 10-5v16l-10 5-10-5zM7 9v6l5 2.500 5-2.500V9l-5 2.500z" fill="#c01818" fillRule="evenodd" stroke="none" />],
  ['Mail', true, <g stroke="none"><path d="M1 9l11-7 11 7v13H1z" fill="#1683d8" /><path d="M1 9h22v13H1z" fill="#35aef2" /><path d="M2 9h20l-10 8z" fill="#f4f8fb" /></g>],
  ['Snipping tool', false, <g><ellipse cx="12" cy="8.500" rx="10" ry="6.500" fill="#f3f1f4" stroke="#c93a4a" transform="rotate(-18 12 8.500)" /><path d="M12 13l7-6M12 12l-5-4" stroke="#999" /><path d="M13 11l6 6M17 12l-1 6" stroke="#5d9ccc" strokeWidth="1.500" /><ellipse cx="16" cy="19.500" rx="1.800" ry="2.500" stroke="#5d9ccc" strokeWidth="1.500" /><ellipse cx="21" cy="17" rx="2" ry="1.700" stroke="#5d9ccc" strokeWidth="1.500" /></g>],
  ['File explorer', true, <g stroke="none"><path d="M2 4h8l2 2h10v15H2z" fill="#e9a92a" /><path d="M2 8h20v12H2z" fill="#fbd65e" /><path d="M6 13h12v8h-3v-4H9v4H6z" fill="#3e94d6" /></g>],
  ['Edge', true, <g stroke="none"><circle cx="12" cy="12" r="10.500" fill="#1676c9" /><path d="M2 9C4 3 9 1 13 1.500c6 .500 10 5 9.500 9.500-.500 4-5 5-8 4 1.500-2 1-5-1.500-6.500C9 6.500 4 7 2 9z" fill="#43d092" /><path d="M1.500 11C3 6 10 5 13 8.500c-4-.500-6 2.500-5.500 6 .500 4 3.500 7 8 7C8 25 1 19 1.500 11z" fill="#249fde" /><path d="M12 10c-2.500 2-2 6 2 7.500 3 1 6 0 7.500-1.500-2 4-7 6-10.500 3-3-2.500-2.500-7.500 1-9z" fill="#123f6e" /></g>],
  ['AutoCAD', true, <g stroke="none"><path d="M1 1h22v22H1z" fill="#f2efef" /><path d="M10 4h4l6 15h-4L12 8 8.500 19H5z" fill="#b81722" /><path d="M7 13c3-1.500 7-1.500 10 0l1 3c-4-2-8-2-12 0z" fill="#de2f3a" /></g>],
  ['Game', true, <g stroke="#471404"><path d="M3 10c0-3 2-5 4-5 0-2 3-3 5-1 2-2 4-1 5 1 3 0 5 2 4 6s-3 9-8 10C7 22 3 16 3 10z" fill="#f0641e" /><path d="M7.500 6v4M12 5v5M16.500 6l-1 4M5 13c3 1 5-2 8-1 3 0 3 2 1 3-2 0-3 1-4 2" /></g>],
];

const Taskbar = () => (
  <div className="flex h-[38px] shrink-0 items-stretch bg-linear-to-r from-[#4b4035] from-30% via-[#2d3540] via-65% to-[#1f2430] text-white">
    <button aria-label="Start" className="flex w-[42px] items-center justify-center bg-[#2f2f31]">
      <Svg w={17} h={17}><path d="M0 2.500l7-1V8H0zM8 1.300L17 0v8H8zM0 9h7v6.500l-7-1zM8 9h9v8l-9-1.300z" fill="#fff" stroke="none" /></Svg>
    </button>
    <label className="flex w-[323px] items-center gap-2.5 border-b border-[#9a9a9a] bg-[#f1f1f1] pl-2.5">
      <Svg w={18} h={18}><circle cx="11" cy="7" r="5" stroke="#222" strokeWidth="1.500" /><path d="M7.500 10.500L1 17" stroke="#222" strokeWidth="1.500" /></Svg>
      <input aria-label="Pesquisar" placeholder="Digite aqui para pesquisar" className="min-w-0 grow text-[13px] outline-none placeholder:text-[#333]" />
    </label>
    {apps.map(([label, running, icon]) => (
      <button key={label} aria-label={label} className={clsx('relative flex w-[46px] items-center justify-center', label === 'AutoCAD' && 'bg-[#5b626c]')}>
        <Svg w={24} h={24}>{icon}</Svg>
        {running && <span className={clsx('absolute bottom-0 h-[3px] bg-[#78b6ea]', label === 'AutoCAD' ? 'inset-x-0' : 'inset-x-1')} />}
      </button>
    ))}
    <div className="ml-auto flex items-center">
      <button aria-label="Hidden icons" className="flex w-[22px] justify-center"><Svg w={12} h={7}><path d="M1 6l5-5 5 5" stroke="#fff" strokeWidth="1.500" /></Svg></button>
      <button aria-label="Battery" className="flex w-6 justify-center"><Svg w={16} h={10}><path d="M1.500 1h12v8h-12zM14.500 3.500v3" stroke="#fff" /><path d="M3 3h2v4H3z" fill="#fff" stroke="none" /></Svg></button>
      <button aria-label="Network" className="flex w-[22px] justify-center"><Svg w={14} h={14}><path d="M1 12A11 11 0 0 1 12 1M4 13a9 9 0 0 1 8.500-8.500M7 13a6 6 0 0 1 5.500-5.500" stroke="#c8cacd" /><circle cx="11" cy="12" r="2" fill="#fff" stroke="none" /></Svg></button>
      <button aria-label="Volume" className="flex w-[18px] justify-center"><Svg w={15} h={14}><path d="M1 5h2.500L7 2v10L3.500 9H1zM9 5c1 1.300 1 2.700 0 4M11 3.500c2 2 2 5 0 7M13 2c2.500 3 2.500 7 0 10" stroke="#fff" /></Svg></button>
      <div className="w-[72px] text-center text-[11px] leading-4">
        <div>22:01</div>
        <div>23/07/2020</div>
      </div>
      <button aria-label="Notifications" className="relative mr-2 ml-1.5 flex w-[26px] justify-center">
        <Svg w={26} h={24}><path d="M3 3h15v12H9l-3 3v-3H3z" fill="#fff" stroke="none" /><path d="M5.500 6.500h10M5.500 9h10M5.500 11.500h7" stroke="#2a2d34" /></Svg>
        <span className="absolute right-0.5 bottom-0 flex size-3.5 items-center justify-center rounded-full bg-[#2d3036] text-[10px] outline outline-[#8a8d92]">1</span>
      </button>
    </div>
  </div>
);

export default function App() {
  return (
    <div className="flex h-screen w-full flex-col overflow-hidden bg-black pr-1.5 pl-0.5 font-['Open_Sans','Noto_Sans',sans-serif]">
      <Header />
      <Ribbon />
      <FileTabs />
      <Canvas />
      <StatusBar />
      <Taskbar />
    </div>
  );
}
